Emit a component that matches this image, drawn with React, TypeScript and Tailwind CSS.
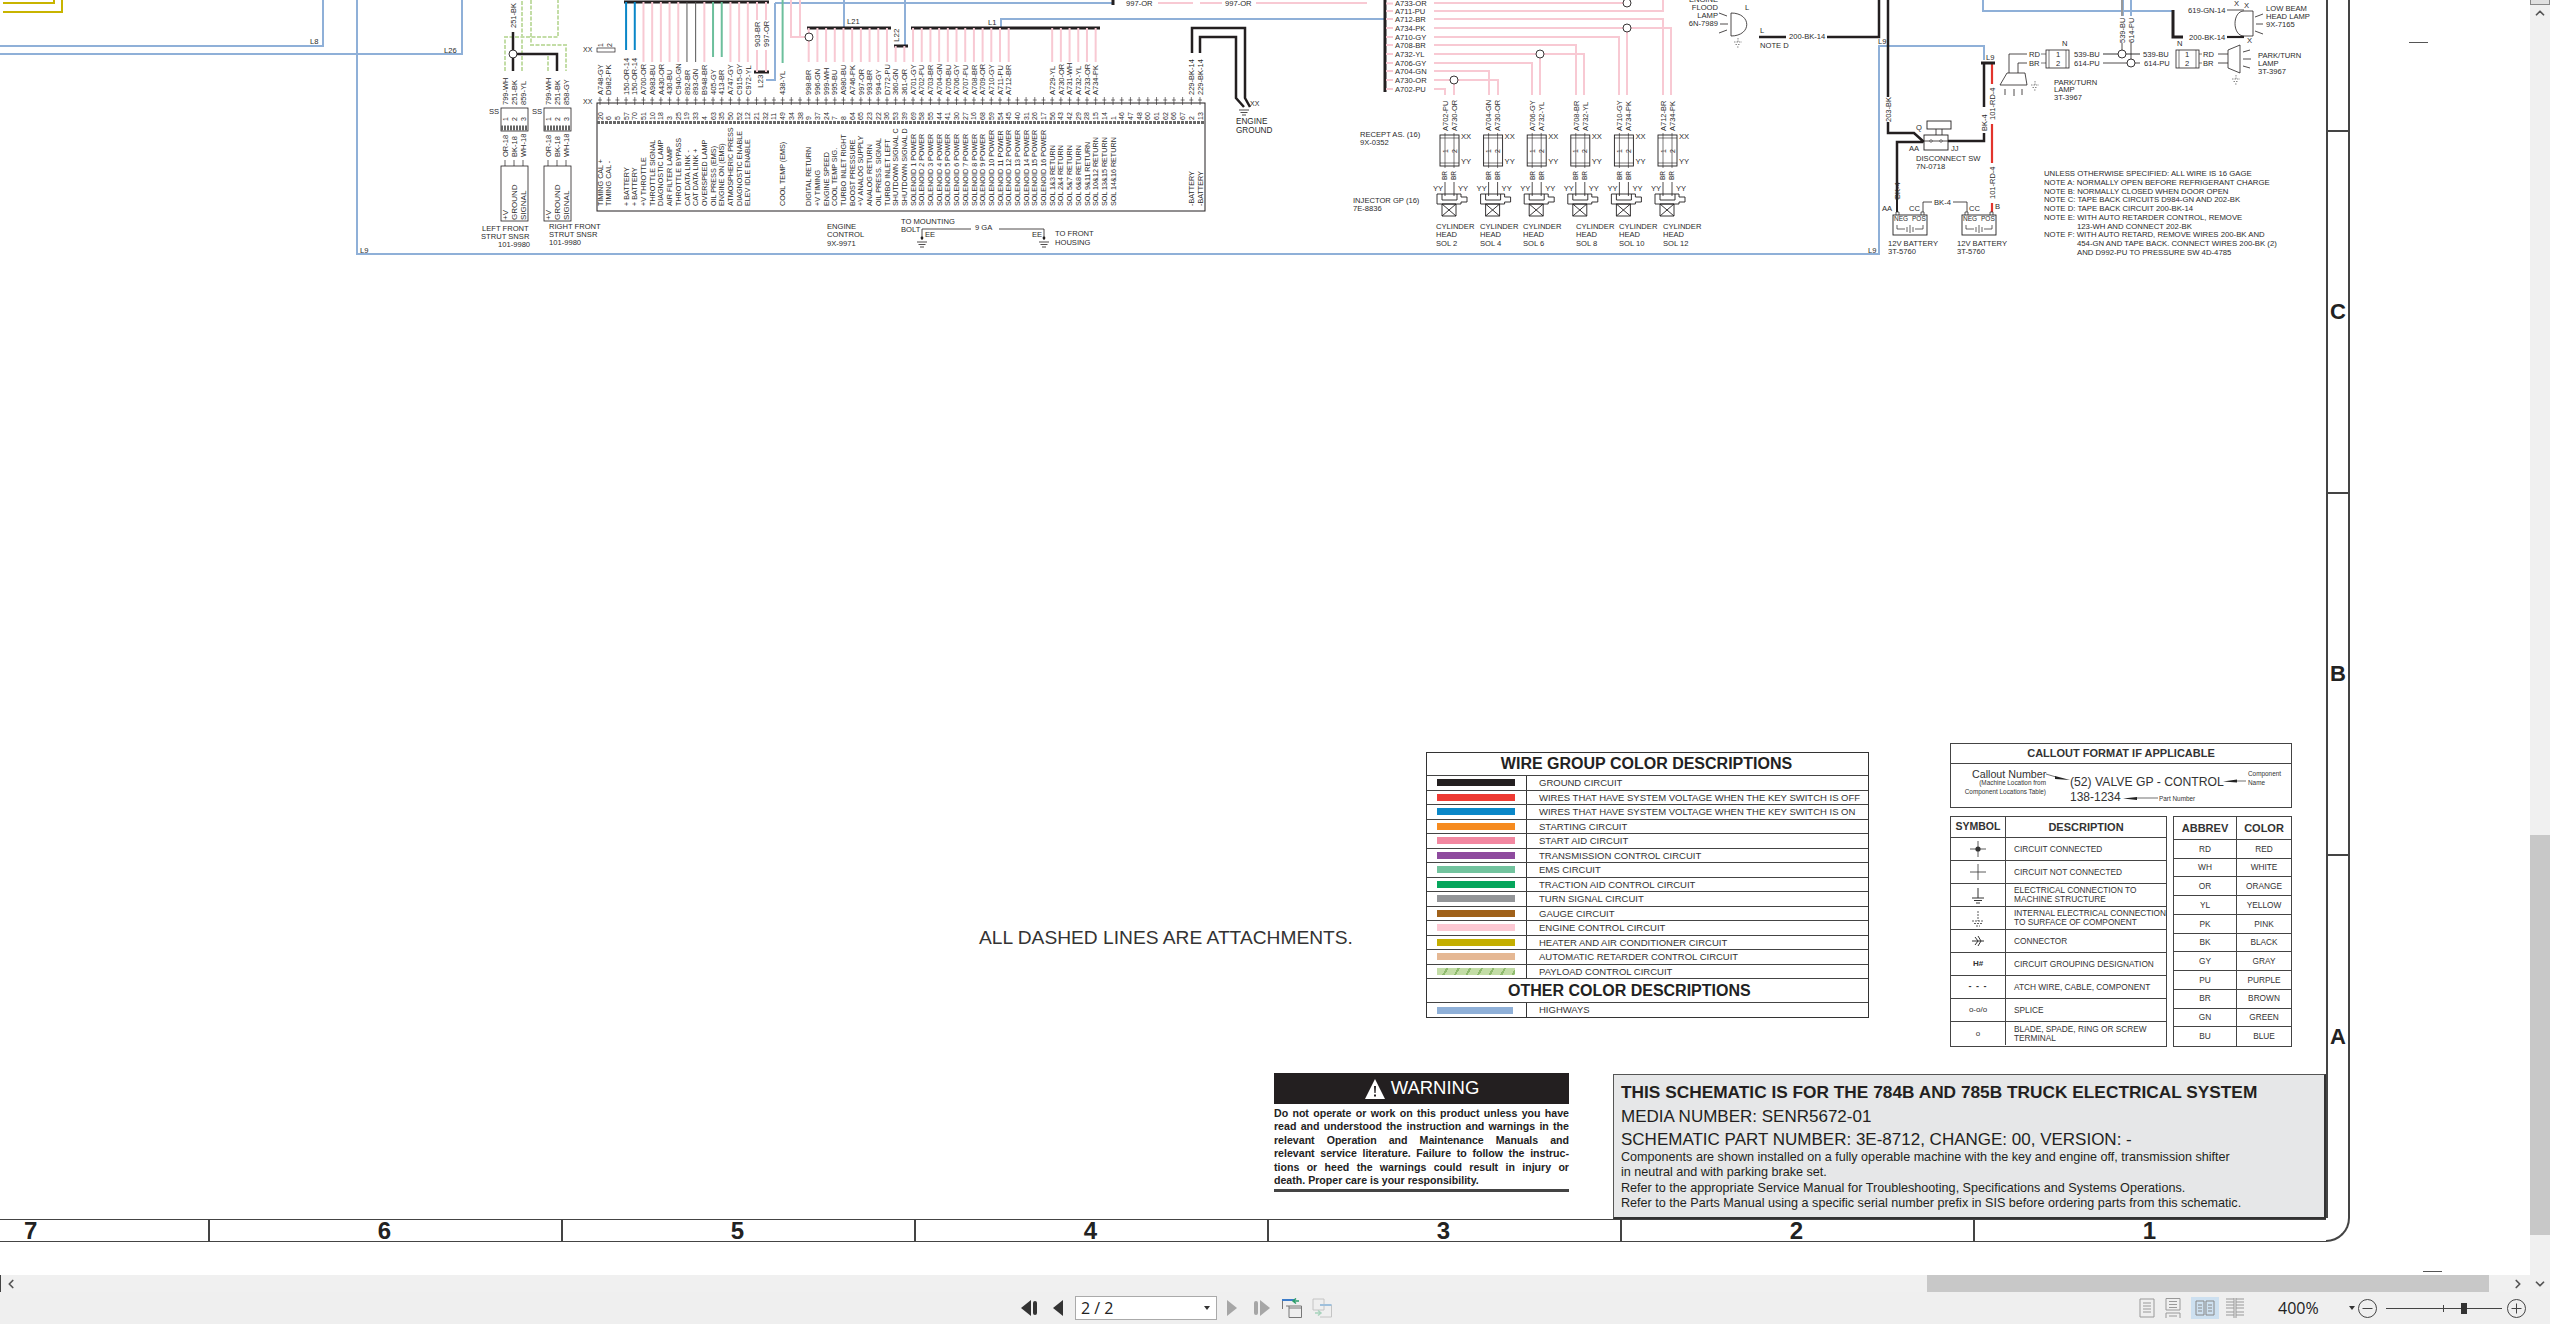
import { ChevronDown, ChevronLeft, ChevronRight, ChevronUp } from "lucide-react";

const PINK = "#f8c9d3";
const BLUE = "#8fb0d8";
const INK = "#231f20";
const TEXT = "#2b2b2b";
const GREEN = "#6cbf9c";
const PAYLOAD = "#c3dda6";

// pin, wire, function: left to right along the engine control block
const pins: [number, string, string][] = [
  [20, "A748-GY", "TIMING CAL +"], [6, "D982-PK", "TIMING CAL -"], [5, "", ""],
  [57, "150-OR-14", "+ BATTERY"], [70, "150-OR-14", "+ BATTERY"], [51, "A700-OR", "+V THROTTLE"],
  [10, "A983-BU", "THROTTLE SIGNAL"], [18, "A430-OR", "DIAGNOSTIC LAMP"], [3, "430-BU", "AIR FILTER LAMP"],
  [25, "C940-GN", "THROTTLE BYPASS"], [19, "892-BR", "CAT DATA LINK -"], [33, "893-GN", "CAT DATA LINK +"],
  [4, "B948-BR", "OVERSPEED LAMP"], [63, "405-GY", "OIL PRESS (EMS)"], [35, "413-BR", "ENGINE ON (EMS)"],
  [50, "A747-GY", "ATMOSPHERIC PRESS"], [52, "C915-GY", "DIAGNOSTIC ENABLE"], [12, "C972-YL", "ELEV IDLE ENABLE"],
  [21, "", ""], [32, "", ""], [11, "", ""], [49, "438-YL", "COOL TEMP (EMS)"], [34, "", ""], [38, "", ""],
  [9, "998-BR", "DIGITAL RETURN"], [37, "996-GN", "+V TIMING"], [24, "999-WH", "ENGINE SPEED"],
  [7, "995-BU", "COOL TEMP SIG."], [8, "A980-BU", "TURBO INLET RIGHT"], [64, "A746-PK", "BOOST PRESSURE"],
  [65, "997-OR", "+V ANALOG SUPPLY"], [23, "993-BR", "ANALOG RETURN"], [22, "994-GY", "OIL PRESS. SIGNAL"],
  [36, "D772-PU", "TURBO INLET LEFT"], [53, "360-GN", "SHUTDOWN SIGNAL C"], [39, "361-OR", "SHUTDOWN SIGNAL D"],
  [69, "A701-GY", "SOLENOID 1 POWER"], [58, "A702-PU", "SOLENOID 2 POWER"], [55, "A703-BR", "SOLENOID 3 POWER"],
  [44, "A704-GN", "SOLENOID 4 POWER"], [41, "A705-BU", "SOLENOID 5 POWER"], [30, "A706-GY", "SOLENOID 6 POWER"],
  [27, "A707-PU", "SOLENOID 7 POWER"], [16, "A708-BR", "SOLENOID 8 POWER"], [68, "A709-OR", "SOLENOID 9 POWER"],
  [59, "A710-GY", "SOLENOID 10 POWER"], [54, "A711-PU", "SOLENOID 11 POWER"], [45, "A712-BR", "SOLENOID 12 POWER"],
  [40, "", "SOLENOID 13 POWER"], [31, "", "SOLENOID 14 POWER"], [26, "", "SOLENOID 15 POWER"], [17, "", "SOLENOID 16 POWER"],
  [56, "A729-YL", "SOL 1&3 RETURN"], [43, "A730-OR", "SOL 2&4 RETURN"], [42, "A731-WH", "SOL 5&7 RETURN"],
  [29, "A732-YL", "SOL 6&8 RETURN"], [28, "A733-OR", "SOL 9&11 RETURN"], [15, "A734-PK", "SOL 10&12 RETURN"],
  [14, "", "SOL 13&15 RETURN"], [1, "", "SOL 14&16 RETURN"], [46, "", ""], [47, "", ""], [48, "", ""],
  [60, "", ""], [61, "", ""], [62, "", ""], [66, "", ""], [67, "", ""],
  [2, "229-BK-14", "-BATTERY"], [13, "229-BK-14", "-BATTERY"],
];
const step = 600 / (pins.length - 1);
const px = (n: number) => 600 + pins.findIndex((p) => p[0] === n) * step;

const busRows = [
  ["A733-OR", 3.5], ["A711-PU", 11], ["A712-BR", 19], ["A734-PK", 28], ["A710-GY", 37], ["A708-BR", 45],
  ["A732-YL", 54], ["A706-GY", 63], ["A704-GN", 71], ["A730-OR", 80], ["A702-PU", 89],
] as [string, number][];

const sols = [
  { a: "A702-PU", b: "A730-OR", name: "SOL 2", tx: 1436 },
  { a: "A704-GN", b: "A730-OR", name: "SOL 4", tx: 1480 },
  { a: "A706-GY", b: "A732-YL", name: "SOL 6", tx: 1523 },
  { a: "A708-BR", b: "A732-YL", name: "SOL 8", tx: 1576 },
  { a: "A710-GY", b: "A734-PK", name: "SOL 10", tx: 1619 },
  { a: "A712-BR", b: "A734-PK", name: "SOL 12", tx: 1663 },
];

const notes: [number, number, string][] = [
  [2044, 173, "UNLESS OTHERWISE SPECIFIED: ALL WIRE IS 16 GAGE"],
  [2044, 182, "NOTE A: NORMALLY OPEN BEFORE REFRIGERANT CHARGE"],
  [2044, 191, "NOTE B: NORMALLY CLOSED WHEN DOOR OPEN"],
  [2044, 199, "NOTE C: TAPE BACK CIRCUITS D984-GN AND 202-BK"],
  [2044, 208, "NOTE D: TAPE BACK CIRCUIT 200-BK-14"],
  [2044, 217, "NOTE E: WITH AUTO RETARDER CONTROL, REMOVE"],
  [2077, 226, "123-WH AND CONNECT 202-BK"],
  [2044, 234, "NOTE F: WITH AUTO RETARD, REMOVE WIRES 200-BK AND"],
  [2077, 243, "454-GN AND TAPE BACK. CONNECT WIRES 200-BK (2)"],
  [2077, 252, "AND D992-PU TO PRESSURE SW 4D-4785"],
];

const wireGroups = [
  ["bg-[#231f20]", "GROUND CIRCUIT"],
  ["bg-[#ee3a33]", "WIRES THAT HAVE SYSTEM VOLTAGE WHEN THE KEY SWITCH IS OFF"],
  ["bg-[#0a87c8]", "WIRES THAT HAVE SYSTEM VOLTAGE WHEN THE KEY SWITCH IS ON"],
  ["bg-[#f68b1f]", "STARTING CIRCUIT"],
  ["bg-[#f287a0]", "START AID CIRCUIT"],
  ["bg-[#8e4a9e]", "TRANSMISSION CONTROL CIRCUIT"],
  ["bg-[#72c39e]", "EMS CIRCUIT"],
  ["bg-[#05a65c]", "TRACTION AID CONTROL CIRCUIT"],
  ["bg-[#939598]", "TURN SIGNAL CIRCUIT"],
  ["bg-[#a0611a]", "GAUGE CIRCUIT"],
  ["bg-[#fcc8d3]", "ENGINE CONTROL CIRCUIT"],
  ["bg-[#c4ae00]", "HEATER AND AIR CONDITIONER CIRCUIT"],
  ["bg-[#e5b894]", "AUTOMATIC RETARDER CONTROL CIRCUIT"],
  ["bg-[repeating-linear-gradient(120deg,#c3dda6_0px,#c3dda6_8px,#8fbb6e_8px,#8fbb6e_10px)]", "PAYLOAD CONTROL CIRCUIT"],
];

const abbrevs = [
  ["RD", "RED"], ["WH", "WHITE"], ["OR", "ORANGE"], ["YL", "YELLOW"], ["PK", "PINK"], ["BK", "BLACK"],
  ["GY", "GRAY"], ["PU", "PURPLE"], ["BR", "BROWN"], ["GN", "GREEN"], ["BU", "BLUE"],
];

function T({ x, y, s = 7.6, a, children }: { x: number; y: number; s?: number; a?: "end" | "middle"; children: React.ReactNode }) {
  return <text x={x} y={y + s * 0.36} fontSize={s} textAnchor={a} fill={TEXT}>{children}</text>;
}

// vertical label read bottom to top, centred on x and starting at y
function R({ x, y, s = 7.5, children }: { x: number; y: number; s?: number; children: React.ReactNode }) {
  const tx = x + s * 0.36;
  return <text x={tx} y={y} fontSize={s} fill={TEXT} transform={`rotate(-90 ${tx} ${y})`}>{children}</text>;
}

function W({ d, c = PINK, w = 2, dash }: { d: string; c?: string; w?: number; dash?: string }) {
  return <path d={d} fill="none" stroke={c} strokeWidth={w} strokeDasharray={dash} />;
}

function Splice({ x, y }: { x: number; y: number }) {
  return <circle cx={x} cy={y} r={4} fill="#fff" stroke={INK} strokeWidth={0.9} />;
}

function Ground({ x, y }: { x: number; y: number }) {
  return <path d={`M${x - 5} ${y}H${x + 5}M${x - 3.5} ${y + 2.5}H${x + 3.5}M${x - 2} ${y + 5}H${x + 2}`} stroke={INK} strokeWidth={0.8} />;
}

function DotGround({ x, y }: { x: number; y: number }) {
  return <path d={`M${x} ${y - 4}V${y}M${x - 4} ${y}H${x + 4}M${x - 2.5} ${y + 2.5}H${x + 2.5}M${x - 1} ${y + 5}H${x + 1}`} stroke="#555" strokeWidth={0.7} strokeDasharray="1.5 1" />;
}

function Battery({ x }: { x: number }) {
  return (
    <g>
      <rect x={x} y={215} width={34} height={20} fill="#fff" stroke={INK} strokeWidth={0.9} />
      <path d={`M${x + 3} ${215}v-3h3v3M${x + 28} ${215}v-3h3v3`} fill="none" stroke={INK} strokeWidth={0.7} />
      <T x={x + 1} y={219} s={6.5}>NEG</T>
      <T x={x + 19} y={219} s={6.5}>POS</T>
      <path d={`M${x + 4} ${225}v4h8M${x + 14} ${227}v5M${x + 17} ${225}v8M${x + 20} ${227}v5M${x + 22} ${229}h8v-4`} fill="none" stroke={INK} strokeWidth={0.7} />
    </g>
  );
}

function Schematic() {
  return (
    <svg width={2326} height={256} className="block shrink-0">
      {/* highways */}
      <W c="#c8b400" d="M3 3H54V0M3 12H62V0" />
      <W c={BLUE} d="M0 46H323V0M0 54H462V0M357 0V254H1879V46H1984V60M1983 0V11H2173M2123 0V16M2131 0V16" />
      <W c={BLUE} d="M1001 28V19H1385M844 0V28M905 0V45M775 3V80H766M775 3H1113" />
      <T x={310} y={41}>L8</T>
      <T x={444} y={50}>L26</T>
      <T x={360} y={250}>L9</T>
      <T x={988} y={22}>L1</T>
      <T x={847} y={21}>L21</T>
      <R x={896} y={42} s={8}>L22</R>
      <R x={760} y={88} s={8}>L23</R>
      <T x={1878} y={41}>L9</T>
      <T x={1868} y={250}>L9</T>
      <T x={1986} y={57}>L9</T>

      {/* payload wires at the strut sensors */}
      <W c={PAYLOAD} dash="4 1.5" d="M505 71V37H558V0M522 71V0M531 0V45H566V71M548 71V54" />
      <W c={INK} w={2.5} d="M513 32V71M513 54H557V71" />
      <Splice x={513} y={54} />
      <R x={513} y={28}>251-BK</R>

      {[{ x: 501, c: "859-YL" }, { x: 544, c: "858-GY" }].map((g) => (
        <g key={g.x}>
          <T x={g.x - 12} y={111}>SS</T>
          {["799-WH", "251-BK", g.c].map((l, i) => <R key={i} x={g.x + 4 + i * 9} y={105}>{l}</R>)}
          <rect x={g.x} y={108} width={27} height={23} fill="#fff" stroke={INK} strokeWidth={0.8} />
          <line x1={g.x} x2={g.x + 27} y1={128} y2={128} stroke="#666" strokeWidth={5} strokeDasharray="2 1" />
          {["1", "2", "3"].map((l, i) => <R key={i} x={g.x + 4 + i * 9} y={121} s={7}>{l}</R>)}
          {["OR-18", "BK-18", "WH-18"].map((l, i) => <R key={i} x={g.x + 4 + i * 9} y={157}>{l}</R>)}
          {[0, 1, 2].map((i) => <path key={i} d={`M${g.x + 4 + i * 9} 160V166`} stroke={INK} strokeWidth={0.7} />)}
          <rect x={g.x} y={166} width={27} height={55} fill="none" stroke={INK} strokeWidth={0.8} />
          {["+V", "GROUND", "SIGNAL"].map((l, i) => <R key={i} x={g.x + 4 + i * 9} y={220} s={8}>{l}</R>)}
        </g>
      ))}
      <T x={482} y={228}>LEFT FRONT</T>
      <T x={481} y={236}>STRUT SNSR</T>
      <T x={498} y={244}>101-9980</T>
      <T x={549} y={226}>RIGHT FRONT</T>
      <T x={549} y={234}>STRUT SNSR</T>
      <T x={549} y={242}>101-9980</T>

      {/* engine control block */}
      <T x={583} y={49} s={7}>XX</T>
      <T x={583} y={101} s={7}>XX</T>
      <rect x={597} y={48} width={18} height={4} fill="#fff" stroke={INK} strokeWidth={0.7} />
      <R x={600} y={47} s={7}>1</R>
      <R x={609} y={47} s={7}>2</R>
      <W c={INK} w={3} d="M624 2H769M807 28H891M894 46H908M911 28H1100M754 72H769M1113 0V5" />
      <W c="#0a87c8" d={`M${px(57)} 2V50M${px(70)} 2V50`} />
      {[51, 10, 18, 3, 25, 4, 50, 52, 12].map((n) => <W key={n} d={`M${px(n)} 2V62`} />)}
      <W c="#555" w={1} d={`M${px(19)} 2V62M${px(33)} 2V62`} />
      <W c={GREEN} d={`M${px(63)} 2V57M${px(35)} 2V57M${px(49)} 0V63`} />
      <W d="M757 2V20M766 2V20M757 50V72M766 50V72" />
      <W d="M791 0V37H809M800 0V37" />
      <R x={757} y={47}>903-BR</R>
      <R x={766} y={47}>997-OR</R>
      {[9, 37, 24, 7, 8, 64, 65, 23, 22, 36, 69, 58, 55, 44, 41, 30, 27, 16, 68, 59, 54, 45, 56, 43, 42, 29, 28, 15].map((n) => (
        <W key={n} d={`M${px(n)} 28V62`} />
      ))}
      <W d={`M${px(53)} 46V62M${px(39)} 46V62`} />
      <Splice x={809} y={37} />

      <T x={1126} y={3.5} s={7.6}>997-OR</T>
      <T x={1225} y={3.5} s={7.6}>997-OR</T>
      <W d="M1158 3H1193M1200 3H1222M1256 3H1367" />

      <rect x={597} y={103} width={608} height={108} fill="#fff" stroke={INK} strokeWidth={1} />
      <line x1={597} x2={1205} y1={122.5} y2={122.5} stroke="#666" strokeWidth={3} strokeDasharray="3 1" />
      {pins.map(([pin, wire, desc], i) => {
        const x = 600 + i * step;
        return (
          <g key={pin}>
            <path d={`M${x} 97V105M${x - 2} 100H${x + 2}`} stroke={INK} strokeWidth={0.6} />
            {wire && <R x={x} y={95}>{wire}</R>}
            <R x={x} y={120} s={7}>{pin}</R>
            {desc && <R x={x} y={206} s={7.2}>{desc}</R>}
          </g>
        );
      })}

      <W c={INK} w={2.5} d="M1192 53V28H1245V98L1250 107M1200 53V37H1236V98L1244 107" />
      <Ground x={1244} y={110} />
      <T x={1250} y={103} s={7}>XX</T>
      <T x={1236} y={121} s={8.2}>ENGINE</T>
      <T x={1236} y={130} s={8.2}>GROUND</T>
      <T x={827} y={226}>ENGINE</T>
      <T x={827} y={234}>CONTROL</T>
      <T x={827} y={243}>9X-9971</T>
      <T x={901} y={221}>TO MOUNTING</T>
      <T x={901} y={229}>BOLT</T>
      <W c={INK} w={0.8} d="M971 229H922V240M999 229H1044V240" />
      <circle cx={922} cy={238} r={1.4} fill={INK} />
      <circle cx={1044} cy={238} r={1.4} fill={INK} />
      <Ground x={922} y={242} />
      <Ground x={1044} y={242} />
      <T x={925} y={234}>EE</T>
      <T x={1032} y={234}>EE</T>
      <T x={975} y={227}>9 GA</T>
      <T x={1055} y={233}>TO FRONT</T>
      <T x={1055} y={242}>HOUSING</T>

      {/* injector harness */}
      <W c={INK} w={3} d="M1385 0V92" />
      {busRows.map(([label, y]) => (
        <g key={label}>
          <W d={`M1386 ${y}H1393`} />
          <T x={1395} y={y}>{label}</T>
        </g>
      ))}
      <W d="M1434 89H1445V95M1434 80H1498V95M1454 80V95M1434 71H1489V95M1434 63H1532V95M1434 54H1584V95M1540 54V95M1434 45H1576V95M1434 37H1619V95M1434 28H1671V95M1627 28V95M1434 19H1663V95M1434 11H1663V0M1434 3H1627" />
      <Splice x={1454} y={80} />
      <Splice x={1540} y={54} />
      <Splice x={1627} y={28} />
      <Splice x={1627} y={3} />
      <T x={1360} y={134}>RECEPT AS. (16)</T>
      <T x={1360} y={142}>9X-0352</T>
      <T x={1353} y={200}>INJECTOR GP (16)</T>
      <T x={1353} y={208}>7E-8836</T>
      {sols.map((s, i) => {
        const x = 1445 + i * 43.6;
        return (
          <g key={s.name}>
            <R x={x} y={131}>{s.a}</R>
            <R x={x + 9} y={131}>{s.b}</R>
            <rect x={x - 5} y={135} width={19} height={31} fill="#fff" stroke={INK} strokeWidth={0.9} />
            <path d={`M${x - 5} 138H${x + 14}M${x - 5} 163H${x + 14}M${x} 133V168M${x + 9} 133V168`} stroke={INK} strokeWidth={0.6} />
            <R x={x} y={153} s={7}>1</R>
            <R x={x + 9} y={153} s={7}>2</R>
            <T x={x + 16} y={136} s={7.6}>XX</T>
            <T x={x + 16} y={161} s={7.6}>YY</T>
            <R x={x} y={180} s={6.5}>BR</R>
            <R x={x + 9} y={180} s={6.5}>BR</R>
            <T x={x - 12} y={188}>YY</T>
            <T x={x + 13} y={188}>YY</T>
            <path d={`M${x} 182V196M${x + 9} 182V196`} stroke={INK} strokeWidth={0.8} />
            <path d={`M${x - 8} 194H${x + 16}V197H${x + 22}V202H${x + 16}V204H${x - 8}Z M${x - 3} 194V200H${x + 12}V194M${x - 3} 204H${x + 11}V216H${x - 3}Z M${x - 3} 204L${x + 11} 216M${x + 11} 204L${x - 3} 216`} fill="none" stroke={INK} strokeWidth={0.9} />
            <T x={s.tx} y={226}>CYLINDER</T>
            <T x={s.tx} y={234}>HEAD</T>
            <T x={s.tx} y={243}>{s.name}</T>
          </g>
        );
      })}

      {/* flood lamp and batteries */}
      <T x={1718} y={-1} a="end">ENGINE</T>
      <T x={1718} y={7} a="end">FLOOD</T>
      <T x={1718} y={15} a="end">LAMP</T>
      <T x={1718} y={23} a="end">6N-7989</T>
      <T x={1745} y={7}>L</T>
      <path d="M1731 13V36M1731 13C1752 13 1752 36 1731 36M1719 13L1727 16M1720 24H1728M1719 33L1727 30" fill="none" stroke={INK} strokeWidth={0.8} />
      <DotGround x={1738} y={42} />
      <T x={1760} y={30}>L</T>
      <W c={INK} w={2.5} d="M1759 37H1786M1827 37H1879V0M1888 0V97M1888 122V133H1914L1924 142M1897 200V142H1923" />
      <W c={INK} w={2} d="M1897 200V212" />
      <T x={1789} y={36}>200-BK-14</T>
      <T x={1760} y={45}>NOTE D</T>
      <R x={1888} y={122}>203-BK</R>
      <rect x={1927} y={121} width={24} height={8} fill="#fff" stroke={INK} strokeWidth={0.9} />
      <path d="M1936 129V135M1942 129V135" stroke={INK} strokeWidth={0.8} />
      <rect x={1924} y={135} width={24} height={15} fill="#fff" stroke={INK} strokeWidth={0.9} />
      <path d="M1924 141H1930L1942 141H1948" stroke={INK} strokeWidth={0.8} />
      <circle cx={1931} cy={141} r={1.2} fill="#fff" stroke={INK} strokeWidth={0.7} />
      <circle cx={1941} cy={141} r={1.2} fill="#fff" stroke={INK} strokeWidth={0.7} />
      <T x={1916} y={127}>Q</T>
      <T x={1909} y={148}>AA</T>
      <T x={1951} y={148}>JJ</T>
      <T x={1916} y={158}>DISCONNECT SW</T>
      <T x={1916} y={166}>7N-0718</T>
      <W c={INK} w={2.5} d="M1948 141H1984V133M1984 63V107" />
      <R x={1984} y={131}>BK-4</R>
      <W c="#e2342c" w={2.2} d="M1992 63V84M1992 124V163M1992 203V212" />
      <W c={INK} w={3} d="M1981 63H1995" />
      <R x={1992} y={120}>101-RD-4</R>
      <R x={1992} y={199}>101-RD-4</R>
      <R x={1897} y={199}>BK-4</R>
      <T x={1882} y={208}>AA</T>
      <T x={1909} y={208}>CC</T>
      <T x={1969} y={208}>CC</T>
      <T x={1995} y={206}>B</T>
      <T x={1934} y={202}>BK-4</T>
      <W c={INK} w={0.8} d="M1923 212V202H1932M1953 202H1967V212" />
      <Battery x={1893} />
      <Battery x={1962} />
      <T x={1888} y={243}>12V BATTERY</T>
      <T x={1888} y={251}>3T-5760</T>
      <T x={1957} y={243}>12V BATTERY</T>
      <T x={1957} y={251}>3T-5760</T>

      {/* park and head lamps */}
      <path d="M2027 54H2009V73M2027 63H2018V73M2007 73H2025L2027 85H2000ZM2005 89V95M2014 89V96M2022 89V95" fill="none" stroke={INK} strokeWidth={0.8} />
      <DotGround x={2035} y={85} />
      <T x={2029} y={54}>RD</T>
      <T x={2029} y={63}>BR</T>
      <T x={2054} y={82}>PARK/TURN</T>
      <T x={2054} y={89}>LAMP</T>
      <T x={2054} y={97}>3T-3967</T>
      <T x={2062} y={43}>N</T>
      <rect x={2046} y={50} width={23} height={18} fill="#fff" stroke={INK} strokeWidth={0.8} />
      <path d="M2041 54H2046M2041 63H2046M2049 50V68M2066 50V68" stroke={INK} strokeWidth={0.6} />
      <T x={2056} y={54}>1</T>
      <T x={2056} y={63}>2</T>
      <T x={2074} y={54}>539-BU</T>
      <T x={2074} y={63}>614-PU</T>
      <W c="#999" w={2} d="M2103 54H2140M2122 0V16" />
      <W c={INK} w={0.8} d="M2103 63H2140M2131 43V63M2122 43V54" />
      <R x={2122} y={43}>539-BU</R>
      <R x={2131} y={43}>614-PU</R>
      <Splice x={2122} y={54} />
      <Splice x={2131} y={63} />
      <T x={2143} y={54}>539-BU</T>
      <T x={2144} y={63}>614-PU</T>
      <T x={2177} y={43}>N</T>
      <rect x={2176} y={50} width={23} height={18} fill="#fff" stroke={INK} strokeWidth={0.8} />
      <path d="M2179 50V68M2196 50V68M2199 54H2202M2199 63H2202" stroke={INK} strokeWidth={0.6} />
      <T x={2185} y={54}>1</T>
      <T x={2185} y={63}>2</T>
      <T x={2203} y={54}>RD</T>
      <T x={2203} y={63}>BR</T>
      <path d="M2218 54H2228M2218 63H2228M2228 50L2240 45V73L2228 68ZM2243 52L2250 50M2243 59H2251M2243 66L2250 68" fill="none" stroke={INK} strokeWidth={0.8} />
      <DotGround x={2236} y={79} />
      <T x={2258} y={55}>PARK/TURN</T>
      <T x={2258} y={63}>LAMP</T>
      <T x={2258} y={71}>3T-3967</T>
      <W c={INK} w={3} d="M2173 10V37H2183" />
      <T x={2188} y={10}>619-GN-14</T>
      <T x={2189} y={37}>200-BK-14</T>
      <W c={INK} w={0.8} d="M2227 10H2244" />
      <W c={INK} w={2.2} d="M2227 37H2244" />
      <path d="M2244 11H2253V36H2244C2232 36 2232 11 2244 11ZM2255 17L2263 14M2256 24H2263M2255 31L2263 34" fill="none" stroke={INK} strokeWidth={0.8} />
      <T x={2234} y={3}>X</T>
      <T x={2244} y={5}>X</T>
      <T x={2247} y={40}>X</T>
      <T x={2266} y={8}>LOW BEAM</T>
      <T x={2266} y={16}>HEAD LAMP</T>
      <T x={2266} y={24}>9X-7165</T>

      {notes.map(([x, y, line]) => <T key={line} x={x} y={y} s={7.75}>{line}</T>)}
    </svg>
  );
}

function WireTable() {
  return (
    <div className="ml-0 mt-[9px] flex w-[443px] flex-col border-[1.5px] border-[#333] text-[#333]">
      <div className="flex h-[22px] items-center justify-center pr-[2px] text-[16px] leading-none font-bold text-[#222]">WIRE GROUP COLOR DESCRIPTIONS</div>
      {wireGroups.map(([swatch, label]) => (
        <div key={label} className="flex h-[14.5px] items-center border-t-[1.5px] border-[#444]">
          <div className="flex h-full w-[100px] items-center border-r border-[#333] pl-[10px]">
            <div className={`h-[7px] w-[78px] ${swatch}`} />
          </div>
          <div className="pl-[12px] text-[9.5px] leading-none whitespace-nowrap">{label}</div>
        </div>
      ))}
      <div className="flex h-[24px] items-center border-t-[1.5px] border-[#444] pl-[81px] text-[16px] leading-none font-bold text-[#222]">OTHER COLOR DESCRIPTIONS</div>
      <div className="flex h-[15px] items-center border-t-[1.5px] border-[#444]">
        <div className="flex h-full w-[100px] items-center border-r border-[#333] pl-[10px]">
          <div className="h-[7px] w-[76px] bg-[#8fb0d8]" />
        </div>
        <div className="pl-[12px] text-[9.5px] leading-none">HIGHWAYS</div>
      </div>
    </div>
  );
}

function CalloutBody() {
  return (
    <svg width={340} height={43} className="block">
      <g fill="#333">
        <text x={21} y={14} fontSize={10.7}>Callout Number</text>
        <text x={95} y={21} fontSize={6.4} textAnchor="end">(Machine Location from</text>
        <text x={95} y={30} fontSize={6.4} textAnchor="end">Component Locations Table)</text>
        <text x={119} y={22} fontSize={12.2}>(52) VALVE GP - CONTROL</text>
        <text x={119} y={37} fontSize={12}>138-1234</text>
        <text x={208} y={37} fontSize={6.4}>Part Number</text>
        <text x={297} y={12} fontSize={6.4}>Component</text>
        <text x={297} y={21} fontSize={6.4}>Name</text>
      </g>
      <path d="M95 10L105 13M186 34H207M286 17H295" stroke="#333" strokeWidth={0.7} fill="none" />
      <path d="M104 12L119 16L104 15ZM186 33L172 34.5L186 36ZM286 15.5L272 17.5L286 18.5Z" fill="#222" />
    </svg>
  );
}

function SymbolIcon({ kind }: { kind: number }) {
  const c = "#333";
  if (kind === 5) return <span className="text-[8px] font-bold text-[#333]">H#</span>;
  if (kind === 6) return <span className="text-[9px] font-bold tracking-[1px] text-[#333]">- - -</span>;
  if (kind === 7) return <span className="text-[8px] text-[#333]">o-o/o</span>;
  if (kind === 8) return <span className="text-[8px] text-[#333]">o</span>;
  return (
    <svg width={20} height={18}>
      {kind === 0 && <path d="M2 9H18M10 1V17" stroke={c} strokeWidth={0.8} />}
      {kind === 0 && <circle cx={10} cy={9} r={2.6} fill={c} />}
      {kind === 1 && <path d="M2 9H18M10 1V17" stroke={c} strokeWidth={0.8} />}
      {kind === 2 && <path d="M10 2V12M4 12H16M6 14.5H14M8 17H12" stroke={c} strokeWidth={1} />}
      {kind === 3 && <path d="M10 2V12M4 12H16M6 14.5H14M8 17H12" stroke={c} strokeWidth={0.8} strokeDasharray="2 1" />}
      {kind === 4 && <path d="M4 9H16M10 4L13 9L10 14M7 5L10 9L7 13" fill="none" stroke={c} strokeWidth={1} />}
    </svg>
  );
}

const symbolRows = [
  ["CIRCUIT CONNECTED"],
  ["CIRCUIT NOT CONNECTED"],
  ["ELECTRICAL CONNECTION TO", "MACHINE STRUCTURE"],
  ["INTERNAL ELECTRICAL CONNECTION", "TO SURFACE OF COMPONENT"],
  ["CONNECTOR"],
  ["CIRCUIT GROUPING DESIGNATION"],
  ["ATCH WIRE, CABLE, COMPONENT"],
  ["SPLICE"],
  ["BLADE, SPADE, RING OR SCREW", "TERMINAL"],
];

function LegendTables() {
  return (
    <div className="ml-[81px] flex w-[342px] flex-col text-[#333]">
      <div className="border-[1.5px] border-[#444]">
        <div className="flex h-[20px] items-center justify-center border-b border-[#444] text-[11px] leading-none font-bold">CALLOUT FORMAT IF APPLICABLE</div>
        <CalloutBody />
      </div>
      <div className="mt-[8px] flex gap-[6px]">
        <div className="flex h-[231px] w-[217px] flex-col border-[1.5px] border-[#444]">
          <div className="flex h-[21px] items-center border-b border-[#444] font-bold">
            <div className="flex h-full w-[55px] items-center justify-center border-r border-[#444] text-[10.5px]">SYMBOL</div>
            <div className="flex-1 text-center text-[11px]">DESCRIPTION</div>
          </div>
          {symbolRows.map((lines, i) => (
            <div key={lines[0]} className="flex h-[23px] items-center border-b border-[#444] last:border-b-0">
              <div className="flex h-full w-[55px] items-center justify-center border-r border-[#444]"><SymbolIcon kind={i} /></div>
              <div className="pl-[8px] text-[8.3px] leading-[9px] whitespace-nowrap">
                {lines.map((l) => <div key={l}>{l}</div>)}
              </div>
            </div>
          ))}
        </div>
        <div className="flex h-[231px] w-[119px] flex-col border-[1.5px] border-[#444]">
          <div className="flex h-[23px] items-center border-b border-[#444] text-[11px] font-bold">
            <div className="flex h-full w-[63px] items-center justify-center border-r border-[#444]">ABBREV</div>
            <div className="flex-1 text-center">COLOR</div>
          </div>
          {abbrevs.map(([a, c]) => (
            <div key={a} className="flex h-[18.8px] items-center border-b border-[#444] text-[8.3px] last:border-b-0">
              <div className="flex h-full w-[63px] items-center justify-center border-r border-[#444]">{a}</div>
              <div className="flex-1 text-center">{c}</div>
            </div>
          ))}
        </div>
      </div>
    </div>
  );
}

const warningLines = [
  "Do not operate or work on this product unless you have",
  "read and understood the instruction and warnings in the",
  "relevant Operation and Maintenance Manuals and",
  "relevant service literature. Failure to follow the instruc-",
  "tions or heed the warnings could result in injury or",
];

function Warning() {
  return (
    <div className="-mt-px ml-[1274px] flex w-[295px] flex-col">
      <div className="flex h-[31px] items-center justify-center gap-[5px] bg-[#231f20] text-[18.5px] leading-none text-white">
        <svg width={22} height={22} viewBox="0 0 22 22">
          <path d="M11 1L21 21H1Z" fill="#fff" />
          <path d="M10 8H12L11.6 15H10.4ZM10 16.5H12V18.5H10Z" fill="#231f20" />
        </svg>
        WARNING
      </div>
      <div className="mt-[3px] border-b-[3px] border-[#444] pb-[2px] text-[10.6px] leading-[13.4px] font-bold text-[#222]">
        {warningLines.map((l) => <div key={l} className="[text-align-last:justify]">{l}</div>)}
        <div>death. Proper care is your responsibility.</div>
      </div>
    </div>
  );
}

function InfoBox() {
  return (
    <div className="ml-[44px] flex h-[145px] w-[713px] flex-col border-t border-l border-r-2 border-b-2 border-t-[#555] border-l-[#555] border-r-[#333] border-b-[#333] bg-[#e6e7e8] pl-[7px] text-[#231f20]">
      <div className="mt-[7px] text-[17.3px] leading-[20px] font-bold whitespace-nowrap">THIS SCHEMATIC IS FOR THE 784B AND 785B TRUCK ELECTRICAL SYSTEM</div>
      <div className="mt-[5px] text-[17px] leading-[20px]">MEDIA NUMBER: SENR5672-01</div>
      <div className="mt-[3px] text-[17px] leading-[20px]">SCHEMATIC PART NUMBER: 3E-8712, CHANGE: 00, VERSION: -</div>
      <div className="text-[12.6px] leading-[15.4px]">
        <div>Components are shown installed on a fully operable machine with the key and engine off, transmission shifter</div>
        <div>in neutral and with parking brake set.</div>
        <div>Refer to the appropriate Service Manual for Troubleshooting, Specifications and Systems Operations.</div>
        <div>Refer to the Parts Manual using a specific serial number prefix in SIS before ordering parts from this schematic.</div>
      </div>
    </div>
  );
}

function Ruler() {
  return (
    <div className="flex h-[23px] shrink-0 border-y-[1.5px] border-[#444] text-[24px] leading-none font-bold text-[#222]">
      <div className="flex w-[208px] items-center pl-[24px]">7</div>
      {["6", "5", "4", "3", "2", "1"].map((n) => (
        <div key={n} className="flex w-[353px] items-center justify-center border-l-2 border-[#444] pr-[2px]">{n}</div>
      ))}
    </div>
  );
}

function Zones() {
  return (
    <div className="flex h-[1242px] w-[24px] shrink-0 flex-col text-[22px] leading-none font-bold text-[#222]">
      <div className="h-[132px] border-x-2 border-b-2 border-[#444]" />
      {["C", "B", "A"].map((z, i) => (
        <div key={z} className={`flex h-[362px] items-center justify-center border-x-2 border-[#444] ${i < 2 ? "border-b-2" : ""}`}>{z}</div>
      ))}
      <div className="flex-1 rounded-br-[24px] border-r-2 border-b-2 border-[#444]" />
    </div>
  );
}

function Triangle({ dir, color }: { dir: "l" | "r"; color: string }) {
  return (
    <svg width={10} height={16} viewBox="0 0 10 16">
      <path d={dir === "l" ? "M10 0V16L0 8Z" : "M0 0V16L10 8Z"} fill={color} />
    </svg>
  );
}

function StatusBar() {
  return (
    <div className="flex h-[32px] shrink-0 items-center bg-[#efefef] font-['Open_Sans',sans-serif] text-[#222]">
      <div className="ml-[1021px] flex items-center gap-[2px]">
        <Triangle dir="l" color="#333" />
        <div className="h-[14px] w-[4px] rounded-[2px] bg-[#333]" />
      </div>
      <div className="ml-[16px]"><Triangle dir="l" color="#333" /></div>
      <div className="ml-[12px] flex h-[24px] w-[142px] items-center justify-between border border-[#aaa] bg-white pr-[6px] pl-[5px] text-[16px] leading-none">
        <span>2 / 2</span>
        <svg width={6} height={4}><path d="M0 0H6L3 4Z" fill="#333" /></svg>
      </div>
      <div className="ml-[10px]"><Triangle dir="r" color="#a6a6a6" /></div>
      <div className="ml-[17px] flex items-center gap-[2px]">
        <div className="h-[14px] w-[4px] rounded-[2px] bg-[#a6a6a6]" />
        <Triangle dir="r" color="#a6a6a6" />
      </div>
      <svg width={20} height={20} viewBox="0 0 20 20" className="ml-[12px]">
        <path d="M0 1H12V3H0Z" fill="#3d7cc9" />
        <path d="M0.5 3V11M4 8H19.5V19.5H7V8" fill="none" stroke="#777" />
        <path d="M7 10H19" stroke="#777" />
        <path d="M17 3H11M14 0.5L11 3L14 5.5" fill="none" stroke="#2e9e6b" strokeWidth={1.5} />
      </svg>
      <svg width={20} height={20} viewBox="0 0 20 20" className="ml-[10px]">
        <path d="M1 1H12V12H1ZM8 7H19.5V19H8" fill="none" stroke="#c4c4c4" />
        <path d="M8 7H19.5" stroke="#9fc0dc" strokeWidth={2} />
        <path d="M3 15H9M6 12.5L9 15L6 17.5" fill="none" stroke="#a8d3bd" strokeWidth={1.5} />
      </svg>

      <div className="ml-auto flex items-center">
        <svg width={16} height={20} viewBox="0 0 16 20">
          <path d="M1 1H15V19H1ZM4 5H12M4 8H12M4 11H12M4 14H12" fill="none" stroke="#999" />
        </svg>
        <svg width={16} height={20} viewBox="0 0 16 20" className="ml-[10px]">
          <path d="M1 0.5H15V12H1ZM4 3.5H12M4 6.5H12M4 9.5H12M1 20V15H15V20M4 18H12" fill="none" stroke="#999" />
        </svg>
        <div className="ml-[10px] flex h-[22px] w-[28px] items-center justify-center bg-[#cde0f0]">
          <svg width={20} height={16} viewBox="0 0 20 16">
            <path d="M1 1H9V15H1ZM11 1H19V15H11ZM3 5H7M3 8H7M3 11H7M13 5H17M13 8H17M13 11H17" fill="none" stroke="#888" />
          </svg>
        </div>
        <svg width={20} height={20} viewBox="0 0 20 20" className="ml-[6px]">
          <path d="M9 0V20M11 0V20M1 1H9M1 4H9M1 7H9M1 10H9M11 1H19M11 4H19M11 7H19M11 10H19M1 14H9M1 17H9M11 14H19M11 17H19" fill="none" stroke="#999" />
        </svg>
        <span className="ml-[33px] w-[40px] text-[16px] leading-none">400%</span>
        <svg width={6} height={4} className="ml-[31px]"><path d="M0 0H6L3 4Z" fill="#333" /></svg>
        <svg width={19} height={19} viewBox="0 0 19 19" className="ml-[3px]">
          <circle cx={9.5} cy={9.5} r={9} fill="none" stroke="#444" />
          <path d="M4.5 9.5H14.5" stroke="#444" />
        </svg>
        <div className="relative ml-[9px] h-px w-[116px] bg-[#444]">
          <div className="absolute top-[-3px] left-[57px] h-[7px] w-px bg-[#444]" />
          <div className="absolute top-[-5px] left-[75px] h-[11px] w-[6px] bg-[#333]" />
        </div>
        <svg width={19} height={19} viewBox="0 0 19 19" className="ml-[5px]">
          <circle cx={9.5} cy={9.5} r={9} fill="none" stroke="#444" />
          <path d="M4.5 9.5H14.5M9.5 4.5V14.5" stroke="#444" />
        </svg>
        <div className="w-[24px]" />
      </div>
    </div>
  );
}

export default function App() {
  return (
    <div className="flex h-[1324px] w-[2550px] flex-col overflow-hidden bg-white font-['Liberation_Sans',Arial,sans-serif]">
      <div className="flex min-h-0 flex-1">
        <div className="flex w-[2530px] flex-col">
          <div className="flex h-[1275px] min-h-0">
            <div className="flex h-[1242px] w-[2326px] shrink-0 flex-col">
              <Schematic />
              <div className="mt-[487px] flex items-start">
                <div className="w-[447px] pl-[979px] pt-[185px] box-content text-[19.2px] leading-[20px] whitespace-nowrap text-[#333]">ALL DASHED LINES ARE ATTACHMENTS.</div>
                <WireTable />
                <LegendTables />
              </div>
              <div className="mt-[27px] flex items-start">
                <Warning />
                <InfoBox />
              </div>
              <Ruler />
            </div>
            <Zones />
            <div className="flex flex-1 flex-col">
              <div className="mt-[42px] ml-[59px] h-px w-[19px] bg-[#555]" />
              <div className="mt-auto mb-[3px] ml-[73px] h-px w-[19px] bg-[#555]" />
            </div>
          </div>
          <div className="flex h-[17px] shrink-0 items-center bg-[#f0f0f0] text-[#555]">
            <div className="h-full w-px bg-[#444]" />
            <ChevronLeft size={14} strokeWidth={3} className="ml-[3px]" />
            <div className="ml-[1909px] h-full w-[562px] bg-[#c8c8c8]" />
            <ChevronRight size={14} strokeWidth={3} className="ml-[22px]" />
          </div>
        </div>
        <div className="flex w-[20px] flex-col items-center bg-[#f0f0f0] text-[#555]">
          <div className="h-[5px] w-full border border-t-0 border-[#888] bg-[#e0e0e0]" />
          <ChevronUp size={14} strokeWidth={3} className="mt-[1px]" />
          <div className="mt-[815px] h-[400px] w-full bg-[#c8c8c8]" />
          <ChevronDown size={14} strokeWidth={3} className="mt-[42px]" />
        </div>
      </div>
      <StatusBar />
    </div>
  );
}
